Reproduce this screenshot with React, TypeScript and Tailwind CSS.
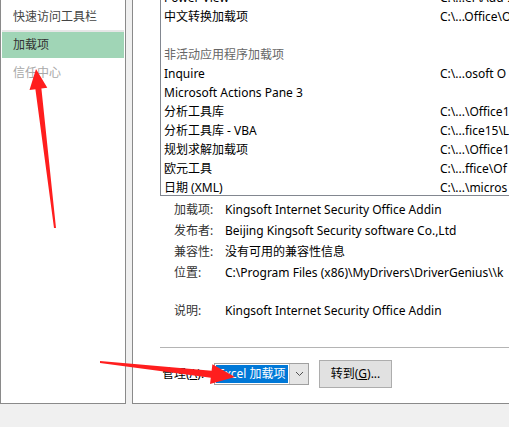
import React from "react";

const FONT = { fontFamily: '"Noto Sans", "Noto Sans CJK SC", sans-serif' };

const listRows: { name: string; path: string; heading?: boolean }[] = [
  { name: "Power View", path: "C:\\...er\\Add-I" },
  { name: "中文转换加载项", path: "C:\\...Office\\O" },
  { name: "", path: "" },
  { name: "非活动应用程序加载项", path: "", heading: true },
  { name: "Inquire", path: "C:\\...osoft O" },
  { name: "Microsoft Actions Pane 3", path: "" },
  { name: "分析工具库", path: "C:\\...\\Office1" },
  { name: "分析工具库 - VBA", path: "C:\\...fice15\\L" },
  { name: "规划求解加载项", path: "C:\\...\\Office1" },
  { name: "欧元工具", path: "C:\\...ffice\\Of" },
  { name: "日期 (XML)", path: "C:\\...\\micros" },
];

const details: { label: string; value: string }[] = [
  { label: "加载项:", value: "Kingsoft Internet Security Office Addin" },
  { label: "发布者:", value: "Beijing Kingsoft Security software Co.,Ltd" },
  { label: "兼容性:", value: "没有可用的兼容性信息" },
  { label: "位置:", value: "C:\\Program Files (x86)\\MyDrivers\\DriverGenius\\\\k" },
];

export default function App() {
  return (
    <div
      className="relative w-[509px] h-[427px] overflow-hidden bg-[#f0f0f0] text-[12px] text-black"
      style={FONT}
    >
      <div className="flex h-[404px]">
        {/* Left nav panel */}
        <div className="w-[126px] shrink-0 h-full bg-white border-l border-r border-b border-[#8a8a8a] flex flex-col pt-[4px]">
          <div className="h-[26px] flex items-center pl-[12px] text-[#444]">快速访问工具栏</div>
          <div className="h-[2px] mx-[1px] bg-[#e6e6e6]" />
          <div className="h-[26px] mx-[1px] flex items-center pl-[11px] bg-[#a0d5b6] text-[#333]">加载项</div>
          <div className="h-[30px] flex items-center pl-[12px] text-[#a8a8a8]">信任中心</div>
        </div>

        <div className="w-[6px] shrink-0" />

        {/* Main panel */}
        <div className="w-[400px] shrink-0 h-full bg-white border-l border-b border-[#8a8a8a] flex flex-col">
          {/* List box */}
          <div className="ml-[27px] mt-[-20px] h-[216px] w-[380px] border border-[#828790] overflow-hidden pt-[7px] pl-[3px] shrink-0">
            {listRows.map((r, i) => (
              <div key={i} className="flex h-[19px] items-center whitespace-nowrap">
                <div className={"w-[276px] shrink-0 " + (r.heading ? "text-[#666]" : "")}>{r.name}</div>
                <div>{r.path}</div>
              </div>
            ))}
          </div>

          {/* Details */}
          <div className="mt-[3px] ml-[41px] flex flex-col">
            {details.map((d, i) => (
              <div key={i} className="flex h-[21px] items-center whitespace-nowrap">
                <div className="w-[51px] shrink-0 text-[#333]">{d.label}</div>
                <div>{d.value}</div>
              </div>
            ))}
            <div className="flex h-[21px] items-center whitespace-nowrap mt-[17px]">
              <div className="w-[51px] shrink-0 text-[#333]">说明:</div>
              <div>Kingsoft Internet Security Office Addin</div>
            </div>
          </div>

          {/* Separator */}
          <div className="ml-[27px] mt-[26px] h-px bg-[#b4b4b4]" />

          {/* Manage row */}
          <div className="flex items-center h-[28px] mt-[12px] ml-[29px]">
            <div className="w-[52px] shrink-0 whitespace-nowrap">
              管理(<span className="underline">A</span>):
            </div>
            <div className="flex w-[95px] h-[22px] border border-[#a0a0a0] bg-white">
              <div className="flex-1 m-[1px] bg-[#0078d7] text-white flex items-center pl-[2px] whitespace-nowrap overflow-hidden">
                Excel 加载项
              </div>
              <div className="w-[19px] bg-[#e5e5e5] border-l border-[#c0c0c0] flex items-center justify-center">
                <svg width="9" height="6" viewBox="0 0 9 6">
                  <path d="M1 1 L4.5 4.5 L8 1" fill="none" stroke="#505050" strokeWidth="1" />
                </svg>
              </div>
            </div>
            <div className="ml-[10px] w-[73px] h-[28px] bg-[#e1e1e1] border border-[#adadad] flex items-center justify-center whitespace-nowrap">
              转到(<span className="underline">G</span>)...
            </div>
          </div>
        </div>
      </div>

      {/* Red annotation arrows */}
      <svg className="absolute left-0 top-0 pointer-events-none" width="509" height="427">
        <polygon
          points="54,228 35.4,89.3 29.5,90 36,69 47.3,87.8 41.4,88.5 56,228"
          fill="#ff1e1e"
        />
        <polygon
          points="100,361 211.6,370.7 212.4,364.3 235,377 210,384.1 210.8,377.7 100,363"
          fill="#ff1e1e"
        />
      </svg>
    </div>
  );
}
